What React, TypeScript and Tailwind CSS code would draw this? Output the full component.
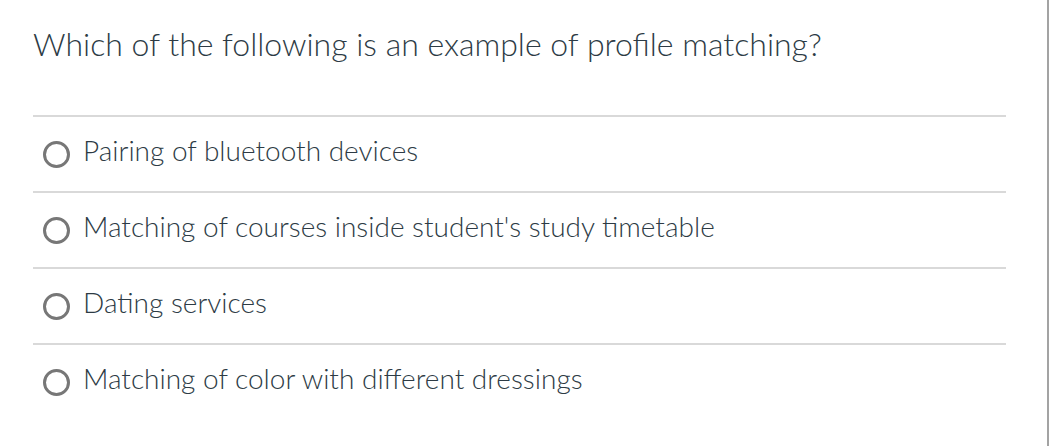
import React from "react";

const options = [
  "Pairing of bluetooth devices",
  "Matching of courses inside student's study timetable",
  "Dating services",
  "Matching of color with different dressings",
];

export default function App() {
  return (
    <div
      className="w-[1054px] h-[446px] bg-white flex overflow-hidden"
      style={{ fontFamily: "Lato, 'Open Sans', sans-serif" }}
    >
      <div className="w-[1047px] pl-[33px] pt-[24px]">
        <div className="w-[973px]">
          <div className="text-[32px] leading-[40px] text-[#2d3b45] font-light h-[91px]">
            Which of the following is an example of profile matching?
          </div>
          {options.map((o) => (
            <div key={o} className="border-t-2 border-[#d9d9d9] h-[76px] flex items-center pb-[3px]">
              <span className="w-[27px] h-[27px] rounded-full border-[3px] border-[#777777] ml-[10px] mr-[13px] mt-[3px] shrink-0" />
              <span className="text-[28px] text-[#2d3b45] font-light mb-[6px]">{o}</span>
            </div>
          ))}
        </div>
      </div>
      <div className="w-[2px] h-full bg-[#a3a3a3]" />
    </div>
  );
}
